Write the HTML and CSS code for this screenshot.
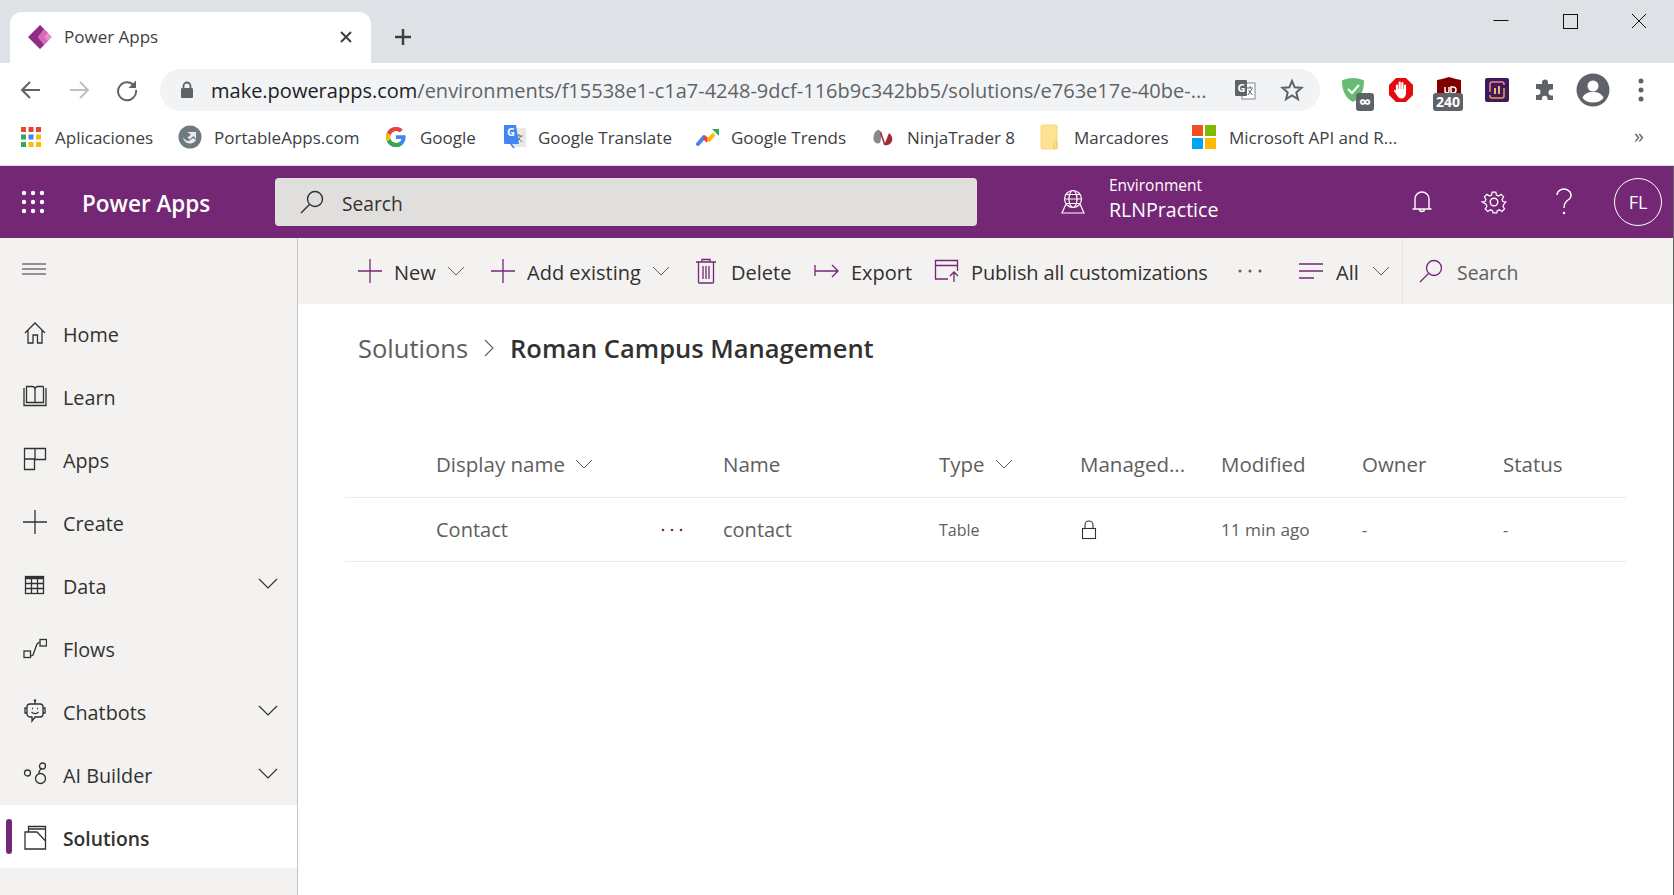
FILE: index.html
```html
<!DOCTYPE html>
<html lang="en">
<head>
    <meta charset="UTF-8">
    <title>Power Apps</title>
    <link rel="stylesheet" href="styles.css">
</head>
<body>
    <!-- Browser tabs -->
    <div class="tabstrip">
        <div class="tab">
            <svg class="favicon" width="24" height="24" viewBox="0 0 24 24"><polygon points="12,0 24,12 12,24" fill="#e48fce"/><polygon points="16,4 10,12 16,20 20,16 16,12 20,8" fill="#d768b8"/><polygon points="12,0 0,12 12,24 16,20 10,12 16,4" fill="#8f2c88"/></svg>
            <span class="tab-title">Power Apps</span>
            <svg class="tab-close" width="14" height="14" viewBox="0 0 14 14"><path d="M2 2l10 10M12 2L2 12" stroke="#3c4043" stroke-width="2"/></svg>
        </div>
        <svg class="tab-new" width="20" height="20" viewBox="0 0 20 20"><path d="M10 2v16M2 10h16" stroke="#3c4043" stroke-width="2.4"/></svg>
        <div class="window-btns">
            <svg width="70" height="16" viewBox="0 0 70 16"><path d="M29.500 7.500h15" stroke="#111" stroke-width="1"/></svg>
            <svg width="70" height="16" viewBox="0 0 70 16"><rect x="29.500" y="1.500" width="14" height="14" fill="none" stroke="#111"/></svg>
            <svg width="70" height="16" viewBox="0 0 70 16"><path d="M28 1l14 14M42 1L28 15" stroke="#111" fill="none"/></svg>
        </div>
    </div>

    <!-- Address bar -->
    <div class="toolbar">
        <svg class="nav-arrow" width="24" height="24" viewBox="0 0 24 24"><path d="M21 12H4M11 4l-8 8 8 8" fill="none" stroke="#5f6368" stroke-width="2"/></svg>
        <svg class="nav-arrow" width="24" height="24" viewBox="0 0 24 24"><path d="M3 12h17M13 4l8 8-8 8" fill="none" stroke="#bdc1c6" stroke-width="2"/></svg>
        <svg class="nav-arrow" width="24" height="24" viewBox="0 0 24 24"><path d="M19 7.500A9 9 0 1 0 21 12" fill="none" stroke="#5f6368" stroke-width="2"/><path d="M21 2.500v7.500h-7.500z" fill="#5f6368"/></svg>
        <div class="omnibox">
            <svg class="lock" width="14" height="18" viewBox="0 0 14 18"><path d="M3.500 7V5a3.500 3.500 0 0 1 7 0v2" fill="none" stroke="#5f6368" stroke-width="1.800"/><rect x="1" y="7" width="12" height="10" rx="1.200" fill="#5f6368"/></svg>
            <span class="url"><b>make.powerapps.com</b>/environments/f15538e1-c1a7-4248-9dcf-116b9c342bb5/solutions/e763e17e-40be-...</span>
            <svg class="omni-icon" width="22" height="22" viewBox="0 0 22 22"><rect x="8" y="4" width="13" height="16" fill="#fff" stroke="#80868b"/><rect x="1" y="1" width="12" height="16" rx="1" fill="#5f6368"/><text x="3.400" y="13" class="g-letter">G</text><path d="M13 9h6M16 7v2M14 16l4-6M14.500 11l4 5" stroke="#5f6368" fill="none"/></svg>
            <svg class="omni-icon" width="24" height="24" viewBox="0 0 24 24"><path d="M12 3l2.700 6.300 6.800.6-5.200 4.500 1.600 6.700L12 17.500l-5.900 3.600 1.600-6.700L2.500 9.900l6.800-.6z" fill="none" stroke="#5f6368" stroke-width="2"/></svg>
        </div>
        <div class="extensions">
            <div class="ext">
                <svg width="26" height="26" viewBox="0 0 26 26"><path d="M13 1c4 0 8 1 11 2.500C24 13 21 21 13 25 5 21 2 13 2 3.500 5 2 9 1 13 1z" fill="#68bc71"/><path d="M8 12l4 4 7-8" fill="none" stroke="#fff" stroke-width="2"/></svg>
                <span class="ext-badge ext-badge-small">∞</span>
            </div>
            <div class="ext">
                <svg width="26" height="26" viewBox="0 0 26 26"><polygon points="8,1 18,1 25,8 25,18 18,25 8,25 1,18 1,8" fill="#e30b0b"/><path d="M9 13V8.500M11.700 13V5.500M14.300 13V6M17 14V8.500" stroke="#fff" stroke-width="2.200" stroke-linecap="round" fill="none"/><path d="M8 12h10v4c0 3.500-2 5.500-4.500 5.500-2 0-3.300-1-4.500-3l-3-4.500c-.5-1 .9-1.900 1.700-1L8 15z" fill="#fff"/></svg>
            </div>
            <div class="ext">
                <svg width="26" height="26" viewBox="0 0 26 26"><path d="M1 3l5-1 7-2 7 2 5 1v13H1z" fill="#800000"/><path d="M9 10v4a2 2 0 0 0 4 0v-4M15 16v-6h2a3 3 0 0 1 0 6z" fill="none" stroke="#fff" stroke-width="1.500"/></svg>
                <span class="ext-badge ext-badge-wide">240</span>
            </div>
            <div class="ext">
                <svg width="24" height="24" viewBox="0 0 24 24"><rect width="24" height="24" rx="2" fill="#3d1a5b"/><path d="M19 7V6a2 2 0 0 0-2-2H7a2 2 0 0 0-2 2v8" fill="none" stroke="#f58a7e" stroke-width="1.500"/><path d="M5 17v1a2 2 0 0 0 2 2h10a2 2 0 0 0 2-2v-8" fill="none" stroke="#e9a34f" stroke-width="1.500"/><path d="M9 10h2v6H9zM13 8h2v8h-2z" fill="#f0b46a"/></svg>
            </div>
            <div class="ext">
                <svg width="24" height="24" viewBox="0 0 24 24"><path d="M9 4.500a3 3 0 0 1 6 0V6h5v5.500h-1.500a3 3 0 0 0 0 6H20V22h-5.500v-1.500a2.800 2.800 0 0 0-5.600 0V22H3v-5h1.500a3 3 0 0 0 0-6H3V6h6z" fill="#5f6368"/></svg>
            </div>
            <div class="ext">
                <svg width="34" height="34" viewBox="0 0 34 34"><circle cx="17" cy="17" r="16.500" fill="#5f6368"/><circle cx="17" cy="13" r="5.500" fill="#fff"/><path d="M6.500 25c2-5 6-6 10.500-6s8.500 1 10.500 6c-2.500 3-6 4.500-10.500 4.500S9 28 6.500 25z" fill="#fff"/></svg>
            </div>
            <div class="ext">
                <svg width="6" height="24" viewBox="0 0 6 24"><circle cx="3" cy="3" r="2.500" fill="#5f6368"/><circle cx="3" cy="12" r="2.500" fill="#5f6368"/><circle cx="3" cy="21" r="2.500" fill="#5f6368"/></svg>
            </div>
        </div>
    </div>

    <!-- Bookmarks -->
    <div class="bookmarks">
        <a class="bm">
            <svg width="22" height="20" viewBox="0 0 20 20"><rect x="0" y="0" width="5" height="5" fill="#ea4335"/><rect x="7.500" y="0" width="5" height="5" fill="#ea4335"/><rect x="15" y="0" width="5" height="5" fill="#ea4335"/><rect x="0" y="7.500" width="5" height="5" fill="#34a853"/><rect x="7.500" y="7.500" width="5" height="5" fill="#4285f4"/><rect x="15" y="7.500" width="5" height="5" fill="#fbbc05"/><rect x="0" y="15" width="5" height="5" fill="#34a853"/><rect x="7.500" y="15" width="5" height="5" fill="#fbbc05"/><rect x="15" y="15" width="5" height="5" fill="#fbbc05"/></svg>
            <span>Aplicaciones</span>
        </a>
        <a class="bm bm-tight">
            <svg width="24" height="24" viewBox="0 0 24 24"><circle cx="12" cy="12" r="11.500" fill="#6d7b80"/><path d="M5 12a7 7 0 0 0 13 3l-3-2-4 3c-3 0-5-2-6-4z" fill="#e8eaeb"/><path d="M9 7h9v7l-2.500-3-4 3.500-2-2 3.500-3z" fill="#e8eaeb"/></svg>
            <span>PortableApps.com</span>
        </a>
        <a class="bm">
            <svg width="22" height="22" viewBox="0 0 48 48"><path d="M44.500 20H24v8.500h11.800C34.700 33.900 30.100 37 24 37c-7.200 0-13-5.800-13-13s5.800-13 13-13c3.100 0 5.900 1.100 8.100 2.900l6.400-6.400C34.600 4.100 29.600 2 24 2 11.800 2 2 11.800 2 24s9.800 22 22 22c11 0 21-8 21-22 0-1.300-.2-2.700-.5-4z" fill="#4285f4"/><path d="M5.300 14.700l7 5.100C14.100 15.100 18.700 11 24 11c3.100 0 5.900 1.100 8.100 2.900l6.400-6.400C34.600 4.100 29.600 2 24 2 15.600 2 8.300 6.700 5.300 14.700z" fill="#ea4335"/><path d="M24 46c5.500 0 10.400-1.900 14.100-5.200l-6.600-5.400C29.500 36.800 26.900 37 24 37c-5.600 0-10.300-3.500-12-8.500l-7 5.400C8 41 15.500 46 24 46z" fill="#34a853"/><path d="M5.300 14.700C3.200 18.500 2 20 2 24s1 6.500 3 9.900l7-5.400c-.6-1.400-1-2.900-1-4.500s.5-3 1.300-4.200z" fill="#fbbc05"/></svg>
            <span>Google</span>
        </a>
        <a class="bm bm-tighter">
            <svg width="24" height="26" viewBox="0 0 24 26"><rect x="8" y="4" width="15" height="19" fill="#e8e8e8"/><path d="M12 12h8M16 10v2M13 19l5-7M14 13l5 5" stroke="#777" fill="none"/><path d="M1 1h12l3 19H9l3 4-2 0-3-4H2a1 1 0 0 1-1-1z" fill="#4285f4"/><text x="4" y="12" class="g-letter">G</text></svg>
            <span>Google Translate</span>
        </a>
        <a class="bm bm-tighter">
            <svg width="24" height="20" viewBox="0 0 24 20"><path d="M2 17l6-7" stroke="#4285f4" stroke-width="4" stroke-linecap="round"/><path d="M8 10l4 4" stroke="#ea4335" stroke-width="4"/><path d="M12 14l6-7" stroke="#fbbc05" stroke-width="4"/><path d="M16 2h7v7z" fill="#34a853"/></svg>
            <span>Google Trends</span>
        </a>
        <a class="bm bm-tight">
            <svg width="24" height="22" viewBox="0 0 24 22"><path d="M3 15c-2-6 2-12 5-11 2 1 3 6 1 13-3 1-5 0-6-2z" fill="#8c8886"/><path d="M10 5l4 12 4-10c3 2 4 6 3 8-1 3-4 5-8 4L9 7z" fill="#a32a3a"/></svg>
            <span>NinjaTrader 8</span>
        </a>
        <a class="bm bm-wide">
            <svg width="18" height="26" viewBox="0 0 18 26"><rect x="1" y="1" width="16" height="24" rx="1" fill="#fde293" stroke="#f8d778"/><rect x="14" y="18" width="3" height="6" fill="none" stroke="#f2c94c"/></svg>
            <span>Marcadores</span>
        </a>
        <a class="bm">
            <svg width="24" height="24" viewBox="0 0 24 24"><rect width="11" height="11" fill="#f25022"/><rect x="13" width="11" height="11" fill="#7fba00"/><rect y="13" width="11" height="11" fill="#00a4ef"/><rect x="13" y="13" width="11" height="11" fill="#ffb900"/></svg>
            <span>Microsoft API and R...</span>
        </a>
        <span class="bm-more">»</span>
    </div>

    <!-- Power Apps header -->
    <header class="app-header">
        <svg class="waffle" width="24" height="24" viewBox="0 0 24 24" fill="#fff"><circle cx="3" cy="3" r="2.200"/><circle cx="12" cy="3" r="2.200"/><circle cx="21" cy="3" r="2.200"/><circle cx="3" cy="12" r="2.200"/><circle cx="12" cy="12" r="2.200"/><circle cx="21" cy="12" r="2.200"/><circle cx="3" cy="21" r="2.200"/><circle cx="12" cy="21" r="2.200"/><circle cx="21" cy="21" r="2.200"/></svg>
        <div class="app-name">Power Apps</div>
        <div class="header-search">
            <svg width="26" height="26" viewBox="0 0 26 26"><circle cx="16" cy="10" r="7.500" fill="none" stroke="#323130" stroke-width="1.400"/><path d="M10.500 15.500L2 24" stroke="#323130" stroke-width="1.400"/></svg>
            <span>Search</span>
        </div>
        <svg class="globe" width="26" height="26" viewBox="0 0 26 26" fill="none" stroke="#fff" stroke-width="1.200"><circle cx="13" cy="10" r="8.500"/><ellipse cx="13" cy="10" rx="4" ry="8.500"/><path d="M4.500 10h17M6 5.500h14M6 14.500h14M6 15L2 24h22l-4-9"/></svg>
        <div class="env">
            <div class="env-label">Environment</div>
            <div class="env-name">RLNPractice</div>
        </div>
        <div class="header-icons">
            <svg width="24" height="26" viewBox="0 0 24 26" fill="none" stroke="#fff" stroke-width="1.400"><path d="M5 20V10a7 7 0 0 1 14 0v10M2.500 20h19M9.500 20a2.500 2.500 0 0 0 5 0"/></svg>
            <svg width="26" height="26" viewBox="0 0 26 26" fill="none" stroke="#fff" stroke-width="1.400"><circle cx="13" cy="13" r="3.800"/><path d="M11 2h4l.7 3.300 2.300 1 2.900-1.800 2.800 2.800-1.800 2.900 1 2.300L26 13v0l-2.100 2.500-1 2.300 1.800 2.900-2.800 2.800-2.900-1.800-2.300 1-.7 2.300h-4l-.7-2.300-2.300-1-2.900 1.800-2.800-2.800 1.800-2.900-1-2.300L0 13v0l3.100-.5 1-2.300-1.800-2.900 2.800-2.800 2.900 1.800 2.300-1z" transform="translate(1.300 1.300) scale(.9)"/></svg>
            <svg width="20" height="28" viewBox="0 0 20 28" fill="none" stroke="#fff" stroke-width="1.400"><path d="M3 7a7 6 0 1 1 11 5c-3 2-4 4-4 8"/><circle cx="10" cy="25" r=".6"/></svg>
            <div class="avatar">FL</div>
        </div>
    </header>

    <div class="app-body">
        <!-- Left nav -->
        <nav class="sidebar">
            <div class="hamburger">
                <svg width="24" height="12" viewBox="0 0 24 12"><path d="M0 1h24M0 6h24M0 11h24" stroke="#323130"/></svg>
            </div>
            <a class="nav-item">
                <svg width="24" height="24" viewBox="0 0 24 24" fill="none" stroke="#323130" stroke-width="1.300"><path d="M2 12L12 2l10 10M5 9.500V22h5v-8h4.500v8H19V9.500"/></svg>
                <span>Home</span>
            </a>
            <a class="nav-item">
                <svg width="24" height="24" viewBox="0 0 24 24" fill="none" stroke="#323130" stroke-width="1.300"><path d="M1 4v17.500h22V4M3.500 2.500v16h8.500v-13c0-2-1-3-3-3zM20.500 2.500v16H12M12 5.500c0-2 1-3 3-3h5.500"/></svg>
                <span>Learn</span>
            </a>
            <a class="nav-item">
                <svg width="24" height="24" viewBox="0 0 24 24" fill="none" stroke="#323130" stroke-width="1.300"><path d="M1.500 1.500h21v11h-11v10h-10zM12 1.500v11M1.500 12h10"/></svg>
                <span>Apps</span>
            </a>
            <a class="nav-item">
                <svg width="24" height="24" viewBox="0 0 24 24"><path d="M12 0v24M0 12h24" stroke="#323130" stroke-width="1.300"/></svg>
                <span>Create</span>
            </a>
            <a class="nav-item">
                <svg width="24" height="24" viewBox="0 0 24 24" fill="none" stroke="#323130" stroke-width="1.300"><rect x="2.500" y="3.500" width="18" height="17"/><path d="M2.500 5h18" stroke-width="2.500"/><path d="M2.500 10.500h18M2.500 15.500h18M8.500 5v15M14.500 5v15"/></svg>
                <span>Data</span>
            </a>
            <a class="nav-item">
                <svg width="24" height="24" viewBox="0 0 24 24" fill="none" stroke="#323130" stroke-width="1.300"><rect x="1" y="15" width="6.500" height="6.500"/><rect x="17" y="3.500" width="6.500" height="6.500"/><path d="M8 20l2-1 4-11 2.500-2"/></svg>
                <span>Flows</span>
            </a>
            <a class="nav-item">
                <svg width="24" height="24" viewBox="0 0 24 24" fill="none" stroke="#323130" stroke-width="1.300"><path d="M12 1v4"/><circle cx="12" cy="1.500" r=".6"/><path d="M7 5h10a3 3 0 0 1 3 3v7a3 3 0 0 1-3 3h-5l-3 4v-4H7a3 3 0 0 1-3-3V8a3 3 0 0 1 3-3zM4 9H2v5h2M20 9h2v5h-2M8.500 13c2 2 5 2 7 0M9 9.500h1M14 9.500h1"/></svg>
                <span>Chatbots</span>
            </a>
            <a class="nav-item">
                <svg width="24" height="24" viewBox="0 0 24 24" fill="none" stroke="#323130" stroke-width="1.300"><circle cx="4.500" cy="11" r="3"/><circle cx="19.500" cy="4" r="3"/><circle cx="17.500" cy="16.500" r="5"/><path d="M15.500 11.800c.5-2 1.500-4 2.500-5.200"/></svg>
                <span>AI Builder</span>
            </a>
            <a class="nav-item active">
                <svg width="24" height="26" viewBox="0 0 24 26" fill="none" stroke="#323130" stroke-width="1.300"><path d="M2 8h12l8.500 9v8H2zM5.500 8V2.500h17V17M5.500 5h17"/></svg>
                <span>Solutions</span>
            </a>
            <svg class="nav-chevron chevron-data" width="20" height="11" viewBox="0 0 20 11"><path d="M1 1l9 9 9-9" fill="none" stroke="#323130" stroke-width="1.200"/></svg>
            <svg class="nav-chevron chevron-bots" width="20" height="11" viewBox="0 0 20 11"><path d="M1 1l9 9 9-9" fill="none" stroke="#323130" stroke-width="1.200"/></svg>
            <svg class="nav-chevron chevron-ai" width="20" height="11" viewBox="0 0 20 11"><path d="M1 1l9 9 9-9" fill="none" stroke="#323130" stroke-width="1.200"/></svg>
        </nav>

        <main class="main">
            <!-- Command bar -->
            <div class="commandbar">
                <div class="cmd">
                    <svg width="26" height="26" viewBox="0 0 26 26"><path d="M13 1v24M1 13h24" stroke="#742774" stroke-width="1.300"/></svg>
                    <span>New</span>
                    <svg class="cmd-chevron" width="18" height="10" viewBox="0 0 18 10"><path d="M1 1l8 8 8-8" fill="none" stroke="#605e5c"/></svg>
                </div>
                <div class="cmd">
                    <svg width="26" height="26" viewBox="0 0 26 26"><path d="M13 1v24M1 13h24" stroke="#742774" stroke-width="1.300"/></svg>
                    <span>Add existing</span>
                    <svg class="cmd-chevron" width="18" height="10" viewBox="0 0 18 10"><path d="M1 1l8 8 8-8" fill="none" stroke="#605e5c"/></svg>
                </div>
                <div class="cmd cmd-delete">
                    <svg width="24" height="26" viewBox="0 0 24 26" fill="none" stroke="#742774" stroke-width="1.300"><path d="M2 4h20M8 4V1.500h8V4M4.500 4v20a1 1 0 0 0 1 1h13a1 1 0 0 0 1-1V4M9 8v13M12 8v13M15 8v13"/></svg>
                    <span>Delete</span>
                </div>
                <div class="cmd cmd-export">
                    <svg width="26" height="16" viewBox="0 0 26 16" fill="none" stroke="#742774" stroke-width="1.300"><path d="M1 2v11M1 8h23M18 2l6 6-6 6"/></svg>
                    <span>Export</span>
                </div>
                <div class="cmd cmd-publish">
                    <svg width="26" height="24" viewBox="0 0 26 24" fill="none" stroke="#742774" stroke-width="1.300"><path d="M14 20H1.500V1.500h22V12M1.500 6.500h22M20 23V14M16 17l4-4 4 4"/></svg>
                    <span>Publish all customizations</span>
                </div>
                <div class="cmd cmd-dots">
                    <svg width="26" height="4" viewBox="0 0 26 4" fill="#605e5c"><circle cx="3" cy="2" r="1.500"/><circle cx="13" cy="2" r="1.500"/><circle cx="23" cy="2" r="1.500"/></svg>
                </div>
                <div class="cmd cmd-all">
                    <svg width="26" height="18" viewBox="0 0 26 18"><path d="M1 2h24M1 9h24M1 16h15" stroke="#742774" stroke-width="1.300"/></svg>
                    <span>All</span>
                    <svg class="cmd-chevron" width="18" height="10" viewBox="0 0 18 10"><path d="M1 1l8 8 8-8" fill="none" stroke="#605e5c"/></svg>
                </div>
                <div class="cmd cmd-search">
                    <svg width="26" height="26" viewBox="0 0 26 26"><circle cx="16" cy="10" r="7.500" fill="none" stroke="#742774" stroke-width="1.300"/><path d="M10.500 15.500L2 24" stroke="#742774" stroke-width="1.300"/></svg>
                    <span>Search</span>
                </div>
            </div>

            <!-- Breadcrumb -->
            <div class="breadcrumb">
                <span class="crumb">Solutions</span>
                <svg width="12" height="18" viewBox="0 0 12 18"><path d="M2 1l8 8-8 8" fill="none" stroke="#605e5c" stroke-width="1.100"/></svg>
                <span class="crumb-current">Roman Campus Management</span>
            </div>

            <!-- Table -->
            <div class="table">
                <div class="row row-head">
                    <div></div>
                    <div class="col-sort">Display name <svg width="18" height="10" viewBox="0 0 18 10"><path d="M1 1l8 8 8-8" fill="none" stroke="#605e5c"/></svg></div>
                    <div>Name</div>
                    <div class="col-sort">Type <svg width="18" height="10" viewBox="0 0 18 10"><path d="M1 1l8 8 8-8" fill="none" stroke="#605e5c"/></svg></div>
                    <div>Managed...</div>
                    <div>Modified</div>
                    <div>Owner</div>
                    <div>Status</div>
                </div>
                <div class="row row-body">
                    <div></div>
                    <div class="cell-name">
                        <span>Contact</span>
                        <svg width="24" height="4" viewBox="0 0 24 4" fill="#742774"><circle cx="3" cy="2" r="1.300"/><circle cx="12" cy="2" r="1.300"/><circle cx="21" cy="2" r="1.300"/></svg>
                    </div>
                    <div>contact</div>
                    <div class="cell-small">Table</div>
                    <div class="cell-lock"><svg width="16" height="20" viewBox="0 0 16 20" fill="none" stroke="#323130" stroke-width="1.100"><rect x="1.500" y="8.500" width="13" height="10"/><path d="M4 8.500V5a4 4 0 0 1 8 0v3.500"/></svg></div>
                    <div class="cell-time">11 min ago</div>
                    <div class="cell-small">-</div>
                    <div class="cell-small">-</div>
                </div>
            </div>
        </main>
    </div>
</body>
</html>
```

FILE: styles.css
```css
* {
    box-sizing: border-box;
}
html, body {
    margin: 0;
    height: 895px;
    overflow: hidden;
}
body {
    font-family: "Open Sans", Arial, sans-serif;
    color: #323130;
    background-color: #fff;
    width: 1674px;
}
svg {
    display: block;
    flex: none;
}

/* browser chrome */
.tabstrip {
    height: 63px;
    background-color: #dee1e6;
    display: flex;
    align-items: flex-end;
    position: relative;
}
.tab {
    width: 361px;
    height: 51px;
    margin-left: 10px;
    background-color: #fff;
    border-radius: 12px 12px 0 0;
    display: flex;
    align-items: center;
    padding: 0 18px 2px 18px;
}
.tab-title {
    font-size: 17px;
    color: #3c4043;
    margin-left: 12px;
    flex: 1;
}
.tab-new {
    margin: 0 0 16px 22px;
}
.window-btns {
    position: absolute;
    top: 13px;
    right: 0;
    display: flex;
}
.toolbar {
    height: 54px;
    display: flex;
    align-items: center;
    padding: 0 0 0 19px;
}
.nav-arrow {
    margin-right: 24px;
}
.omnibox {
    width: 1160px;
    height: 42px;
    margin-left: -3px;
    border-radius: 21px;
    background-color: #f1f3f4;
    display: flex;
    align-items: center;
    padding: 0 16px 0 20px;
}
.lock {
    margin-right: 17px;
}
.url {
    font-size: 20px;
    color: #5f6368;
    white-space: nowrap;
    flex: 1;
    overflow: hidden;
}
.url b {
    font-weight: 400;
    color: #202124;
}
.omni-icon {
    margin-left: 24px;
}
.extensions {
    display: flex;
    margin-left: 9px;
}
.ext {
    width: 48px;
    height: 40px;
    display: flex;
    align-items: center;
    justify-content: center;
    position: relative;
}
.ext-badge {
    position: absolute;
    background-color: #5f6368;
    color: #fff;
    border-radius: 3px;
    font-size: 14px;
    font-weight: 700;
    line-height: 18px;
    height: 18px;
    text-align: center;
}
.ext-badge-small {
    width: 18px;
    right: 3px;
    bottom: -1px;
    font-size: 17px;
}
.ext-badge-wide {
    width: 30px;
    left: 8px;
    bottom: -1px;
}
.g-letter {
    font-size: 11px;
    font-weight: 700;
    fill: #fff;
}
.bookmarks {
    height: 49px;
    display: grid;
    grid-template-columns: 158px 207px 118px 193px 175px 169px 152px 442px 1fr;
    align-items: center;
    padding: 0 0 8px 20px;
    border-bottom: 1px solid #dadce0;
}
.bm {
    display: flex;
    align-items: center;
    font-size: 17px;
    color: #3c4043;
    white-space: nowrap;
}
.bm svg {
    margin-right: 13px;
}
.bm-tight svg {
    margin-right: 12px;
}
.bm-tighter svg {
    margin-right: 11px;
}
.bm-wide svg {
    margin-right: 16px;
}
.bm-more {
    font-size: 20px;
    color: #5f6368;
    margin-top: -3px;
}

/* power apps header */
.app-header {
    height: 72px;
    background-color: #742774;
    color: #fff;
    display: flex;
    align-items: center;
    padding-left: 21px;
    border-right: 1px solid #666;
}
.app-name {
    font-size: 22.500px;
    font-weight: 600;
    margin: 2px 0 0 37px;
    width: 193px;
}
.header-search {
    width: 702px;
    height: 48px;
    background-color: #e1dfdd;
    border-radius: 4px;
    color: #323130;
    font-size: 19.200px;
    display: flex;
    align-items: center;
    padding-left: 24px;
    gap: 17px;
}
.header-search span {
    margin-top: 2px;
}
.globe {
    margin-left: 83px;
}
.env {
    margin-left: 23px;
    width: 301px;
    padding-bottom: 8px;
}
.env-label {
    font-size: 15.500px;
    line-height: 22px;
}
.env-name {
    font-size: 19.600px;
    line-height: 27px;
}
.header-icons {
    display: flex;
    align-items: center;
}
.header-icons svg {
    margin-right: 47px;
}
.avatar {
    width: 48px;
    height: 48px;
    border-radius: 50%;
    border: 1px solid #fff;
    font-size: 18px;
    display: flex;
    align-items: center;
    justify-content: center;
    margin-left: -7px;
}

/* left nav */
.app-body {
    display: flex;
    height: 657px;
}
.sidebar {
    width: 298px;
    background-color: #f3f2f1;
    border-right: 1px solid #c8c6c4;
    position: relative;
    flex: none;
}
.hamburger {
    height: 63px;
    padding: 25px 0 0 22px;
}
.nav-item {
    height: 63px;
    display: flex;
    align-items: center;
    padding-left: 23px;
    font-size: 19.800px;
    gap: 16px;
    position: relative;
}
.nav-item span {
    margin-top: 4px;
}
.nav-item.active {
    background-color: #fff;
    font-weight: 600;
    font-size: 19.300px;
}
.nav-item.active::before {
    content: "";
    position: absolute;
    left: 6px;
    top: 14px;
    width: 6px;
    height: 35px;
    border-radius: 3px;
    background-color: #742774;
}
.nav-chevron {
    position: absolute;
    left: 258px;
}
.chevron-data { top: 340px; }
.chevron-bots { top: 467px; }
.chevron-ai { top: 530px; }

/* command bar */
.main {
    flex: 1;
    min-width: 0;
    border-right: 1px solid #666;
}
.commandbar {
    height: 66px;
    background-color: #f3f2f1;
    display: grid;
    grid-template-columns: 133px 204px 118px 122px 302px 62px 104px 1fr;
    align-items: center;
    padding-left: 59px;
    font-size: 20px;
}
.cmd {
    display: flex;
    align-items: center;
    gap: 11px;
    height: 100%;
    white-space: nowrap;
}
.cmd span {
    margin-top: 2px;
}
.cmd-chevron {
    margin-left: 0;
}
.cmd-delete {
    gap: 13px;
}
.cmd-export svg {
    margin-left: 2px;
}
.cmd-publish {
    letter-spacing: -0.15px;
}
.cmd-dots {
    padding-left: 1px;
}
.cmd-all {
    gap: 12px;
}
.cmd-all .cmd-chevron {
    margin-left: 1px;
}
.cmd-search {
    border-left: 1px solid #e8e6e4;
    padding-left: 15px;
    gap: 13px;
    color: #605e5c;
    font-size: 19.400px;
}
.breadcrumb {
    display: flex;
    align-items: center;
    padding-left: 60px;
    margin-top: 22px;
    height: 44px;
}
.crumb {
    font-size: 25.500px;
    color: #605e5c;
}
.breadcrumb svg {
    margin: 0 15px;
}
.crumb-current {
    font-size: 25.500px;
    font-weight: 600;
}

/* table */
.table {
    margin: 64px 0 0 47px;
    width: 1281px;
}
.row {
    display: grid;
    grid-template-columns: 91px 287px 216px 141px 141px 141px 141px 123px;
    align-items: center;
    border-bottom: 1px solid #edebe9;
}
.row-head {
    height: 64px;
    font-size: 20.500px;
    color: #605e5c;
    padding-bottom: 3px;
}
.row-body {
    height: 64px;
    font-size: 20px;
    color: #605e5c;
}
.col-sort {
    display: flex;
    align-items: center;
    gap: 10px;
}
.cell-name {
    display: flex;
    align-items: center;
    justify-content: space-between;
    padding-right: 39px;
}
.cell-small {
    font-size: 16px;
}
.cell-lock {
    padding-left: 1px;
}
.cell-time {
    font-size: 17.200px;
}
```
